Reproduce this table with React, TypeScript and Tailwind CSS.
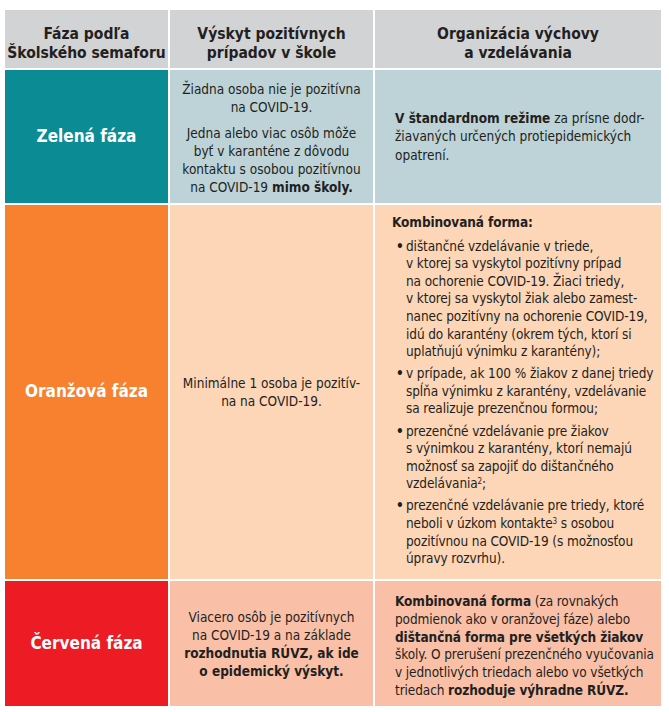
import { ReactNode } from 'react'

const font = 'font-["Liberation_Sans_Narrow","DejaVu_Sans_Condensed",sans-serif]'

function Bullet({ children }: { children: ReactNode }) {
  return (
    <li className="flex">
      <span className="w-[11px] shrink-0 pl-[1px] font-bold">•</span>
      <span>{children}</span>
    </li>
  )
}

export default function App() {
  return (
    <div className={`min-h-[712px] bg-white pt-[10px] pl-[5px] text-[#231f20] ${font}`}>
      <div className="grid w-[656px] grid-cols-[163px_203px_286px] grid-rows-[58px_133px_374px_125px] gap-[2px]">
        {/* Header */}
        <div className="flex items-center justify-center bg-[#d1d3d4] pt-[10px] text-center text-[15.5px] leading-[19px] font-bold">
          <p>Fáza podľa<br />Školského semaforu</p>
        </div>
        <div className="flex items-center justify-center bg-[#d1d3d4] pt-[10px] text-center text-[15.5px] leading-[19px] font-bold">
          <p>Výskyt pozitívnych<br />prípadov v škole</p>
        </div>
        <div className="flex items-center justify-center bg-[#d1d3d4] pt-[10px] text-center text-[15.5px] leading-[19px] font-bold">
          <p>Organizácia výchovy<br />a vzdelávania</p>
        </div>

        {/* Zelená fáza */}
        <div className="flex items-center justify-center bg-[#0b8c94] text-[17px] font-bold text-white">
          Zelená fáza
        </div>
        <div className="flex flex-col items-center justify-center gap-[8px] bg-[#bdd3d8] pt-[3px] text-center text-[13.5px] leading-[18px]">
          <p>Žiadna osoba nie je pozitívna<br />na COVID-19.</p>
          <p>
            Jedna alebo viac osôb môže<br />byť v karanténe z dôvodu<br />kontaktu s osobou pozitívnou<br />na COVID-19{' '}
            <b>mimo školy.</b>
          </p>
        </div>
        <div className="flex items-center bg-[#bdd3d8] pl-[20px] text-[13.5px] leading-[18.5px]">
          <p>
            <b>V štandardnom režime</b> za prísne dodr-<br />žiavaných určených protiepidemických<br />opatrení.
          </p>
        </div>

        {/* Oranžová fáza */}
        <div className="flex items-center justify-center bg-[#f7812f] text-[17px] font-bold text-white">
          Oranžová fáza
        </div>
        <div className="flex items-center justify-center bg-[#fdd5b7] text-center text-[13.5px] leading-[18px]">
          <p>Minimálne 1 osoba je pozitív-<br />na na COVID-19.</p>
        </div>
        <div className="bg-[#fdd5b7] pt-[9px] pl-[17px] text-[13.5px] leading-[17.6px] tracking-[-0.1px]">
          <p className="font-bold">Kombinovaná forma:</p>
          <ul className="mt-[6px] flex flex-col gap-[4.5px] pl-[3px]">
            <Bullet>
              dištančné vzdelávanie v triede,<br />v ktorej sa vyskytol pozitívny prípad<br />na ochorenie COVID-19. Žiaci triedy,<br />
              v ktorej sa vyskytol žiak alebo zamest-<br />nanec pozitívny na ochorenie COVID-19,<br />idú do karantény (okrem tých, ktorí si<br />
              uplatňujú výnimku z karantény);
            </Bullet>
            <Bullet>
              v prípade, ak 100 % žiakov z danej triedy<br />spĺňa výnimku z karantény, vzdelávanie<br />sa realizuje prezenčnou formou;
            </Bullet>
            <Bullet>
              prezenčné vzdelávanie pre žiakov<br />s výnimkou z karantény, ktorí nemajú<br />možnosť sa zapojiť do dištančného<br />
              vzdelávania<sup className="text-[8px]">2</sup>;
            </Bullet>
            <Bullet>
              prezenčné vzdelávanie pre triedy, ktoré<br />neboli v úzkom kontakte<sup className="text-[8px]">3</sup> s osobou<br />
              pozitívnou na COVID-19 (s možnosťou<br />úpravy rozvrhu).
            </Bullet>
          </ul>
        </div>

        {/* Červená fáza */}
        <div className="flex items-center justify-center bg-[#ed1b24] text-[17px] font-bold text-white">
          Červená fáza
        </div>
        <div className="flex items-center justify-center bg-[#fac0a7] text-center text-[13.5px] leading-[18px]">
          <p>
            Viacero osôb je pozitívnych<br />na COVID-19 a na základe<br />
            <b>rozhodnutia RÚVZ, ak ide<br />o epidemický výskyt.</b>
          </p>
        </div>
        <div className="bg-[#fac0a7] pt-[12px] pl-[20px] text-[13.5px] leading-[17.8px] tracking-[-0.1px]">
          <p>
            <b>Kombinovaná forma</b> (za rovnakých<br />podmienok ako v oranžovej fáze) alebo<br />
            <b>dištančná forma pre všetkých žiakov</b>
            <br />školy. O prerušení prezenčného vyučovania<br />v jednotlivých triedach alebo vo všetkých<br />
            triedach <b>rozhoduje výhradne RÚVZ.</b>
          </p>
        </div>
      </div>
    </div>
  )
}
